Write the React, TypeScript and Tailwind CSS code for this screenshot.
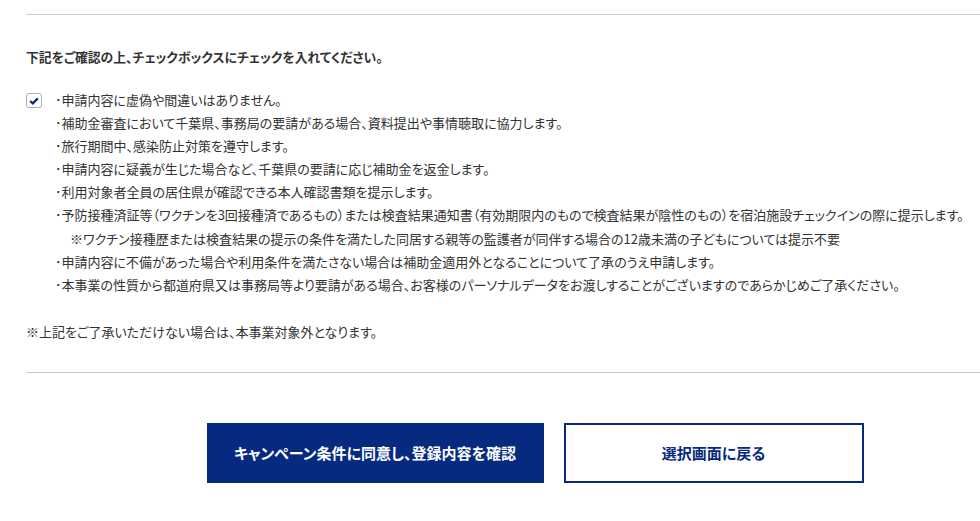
import React from "react";

const items: { text: string; note?: boolean }[] = [
  { text: "･申請内容に虚偽や間違いはありません。" },
  { text: "･補助金審査において千葉県、事務局の要請がある場合、資料提出や事情聴取に協力します。" },
  { text: "･旅行期間中、感染防止対策を遵守します。" },
  { text: "･申請内容に疑義が生じた場合など、千葉県の要請に応じ補助金を返金します。" },
  { text: "･利用対象者全員の居住県が確認できる本人確認書類を提示します。" },
  { text: "･予防接種済証等（ワクチンを3回接種済であるもの）または検査結果通知書（有効期限内のもので検査結果が陰性のもの）を宿泊施設チェックインの際に提示します。" },
  { text: "※ワクチン接種歴または検査結果の提示の条件を満たした同居する親等の監護者が同伴する場合の12歳未満の子どもについては提示不要", note: true },
  { text: "･申請内容に不備があった場合や利用条件を満たさない場合は補助金適用外となることについて了承のうえ申請します。" },
  { text: "･本事業の性質から都道府県又は事務局等より要請がある場合、お客様のパーソナルデータをお渡しすることがございますのであらかじめご了承ください。" },
];

export default function App() {
  return (
    <div
      className="w-[980px] h-[521px] overflow-hidden bg-white text-[#333] [font-feature-settings:'palt']"
      style={{ fontFamily: '"Noto Sans CJK JP", "Noto Sans", sans-serif' }}
    >
      <div className="ml-[26px] w-[1018px] pt-[14px]">
        <div className="h-px bg-[#cccccc]" />
        <p className="mt-[33px] text-[12.8px] leading-[18px] font-bold whitespace-nowrap">
          下記をご確認の上、チェックボックスにチェックを入れてください。
        </p>
        <div className="mt-[26px] flex">
          <div className="w-[16px] h-[15px] mt-[1px] border-[1.5px] border-[#b0b0b0] rounded-[3px] flex items-center justify-center bg-white">
            <svg width="10" height="8" viewBox="0 0 10 8">
              <path d="M1.2 4 L3.8 6.4 L8.8 1.4" fill="none" stroke="#062a80" strokeWidth="2.2" />
            </svg>
          </div>
          <ul className="ml-[13px] text-[13px] leading-[23px] whitespace-nowrap -mt-[4px]">
            {items.map((it, i) => (
              <li key={i} className={it.note ? "pl-[15px] pt-[1px]" : ""}>
                {it.text}
              </li>
            ))}
          </ul>
        </div>
        <p className="mt-[24px] text-[13px] leading-[23px] whitespace-nowrap">
          ※上記をご了承いただけない場合は、本事業対象外となります。
        </p>
        <div className="mt-[29px] h-px bg-[#cccccc]" />
        <div className="mt-[50px] flex justify-center gap-[20px]">
          <button className="w-[337px] h-[60px] bg-[#062a80] text-white text-[15px] font-bold flex items-center justify-center">
            キャンペーン条件に同意し、登録内容を確認
          </button>
          <button className="w-[300px] h-[60px] bg-white border-2 border-[#062a80] text-[#062a80] text-[15px] font-bold flex items-center justify-center">
            選択画面に戻る
          </button>
        </div>
      </div>
    </div>
  );
}
